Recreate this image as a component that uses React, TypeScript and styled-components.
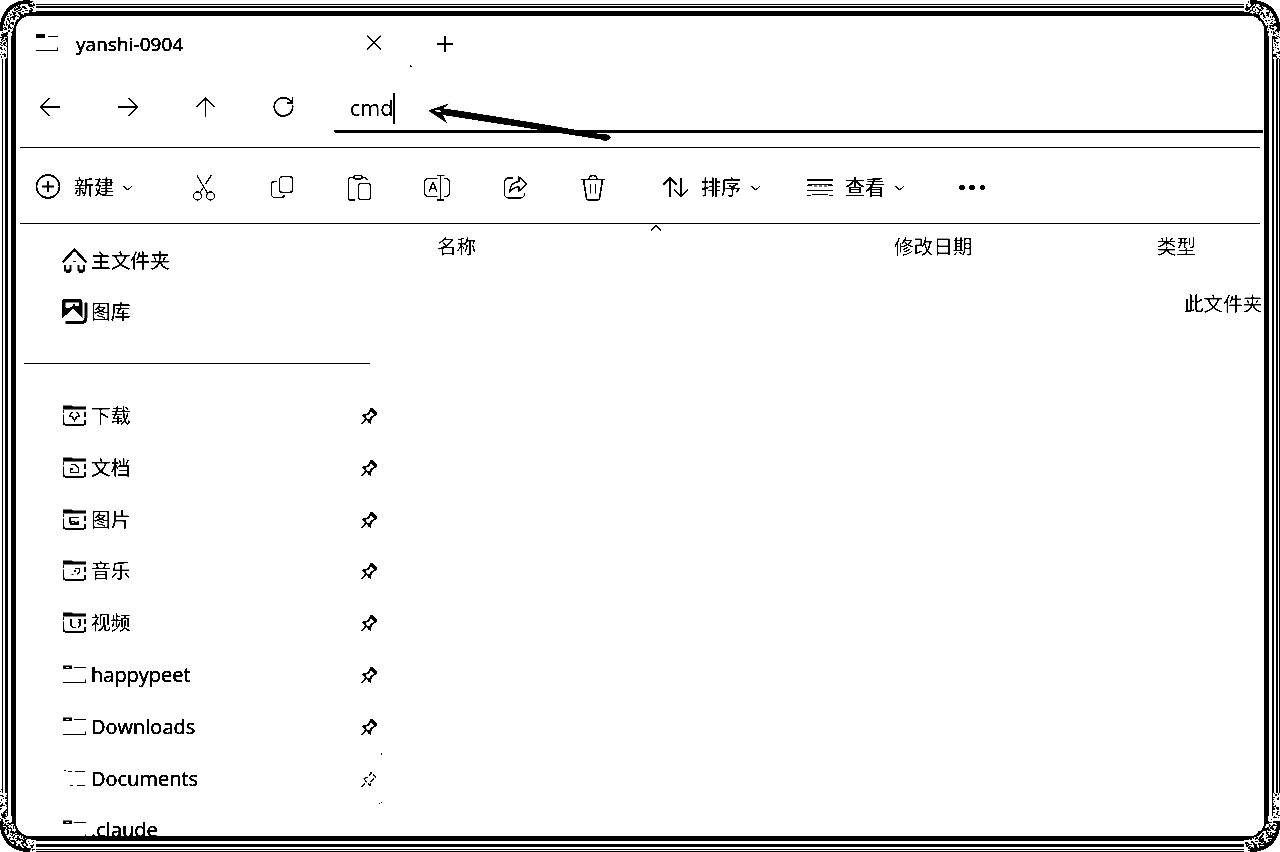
import React from "react";
import styled, { createGlobalStyle } from "styled-components";

const GlobalStyle = createGlobalStyle`
  * { box-sizing: border-box; }
  html, body { margin: 0; background: #fff; overflow: hidden; }
`;

const Page = styled.div`
  position: relative;
  width: 1280px;
  height: 852px;
  display: flex;
  padding: 4px 0 0 2px;
  background: #fff;
  color: #000;
  overflow: hidden;
  font-family: "Open Sans", "Noto Sans CJK SC", sans-serif;
  filter: grayscale(1) contrast(12);
`;

const Ring = styled.div<{ $width: string; $gap: string; $radius: number }>`
  flex: 1;
  min-width: 0;
  display: flex;
  border: solid #000;
  border-width: ${(p) => p.$width};
  padding: ${(p) => p.$gap};
  border-radius: ${(p) => p.$radius}px;
`;

const Window = styled.div`
  flex: 1;
  min-width: 0;
  height: 820px;
  display: flex;
  flex-direction: column;
  overflow: hidden;
  background: #fff;
  border-radius: 13px;
`;

const TabBar = styled.div`
  display: flex;
  align-items: center;
  height: 56px;
  flex: none;
  padding-left: 19px;
`;

const TabTitle = styled.span`
  width: 289px;
  margin-left: 15px;
  font-size: 18.9px;
  line-height: 28px;
  letter-spacing: 0.1px;
  -webkit-text-stroke: 0.5px #000;
`;

const TabButton = styled.span<{ $before: number }>`
  display: flex;
  margin-left: ${(p) => p.$before}px;
`;

const NavBar = styled.div`
  display: flex;
  height: 75px;
  flex: none;
  padding-left: 23px;
`;

const NavButtons = styled.div`
  display: flex;
  align-items: center;
  gap: 56px;
  height: 70px;
`;

const Address = styled.div`
  flex: 1;
  display: flex;
  align-items: center;
  height: 47px;
  margin: 14px 1px 0 39px;
  padding-left: 16px;
  border-bottom: 3px solid #000;
  border-bottom-left-radius: 3px;
  font-size: 21.5px;
  line-height: 30px;
  -webkit-text-stroke: 0.15px #000;
`;

const Caret = styled.span`
  width: 2px;
  height: 31px;
  background: #000;
`;

const Rule = styled.div`
  flex: none;
  height: 1px;
  margin: 0 4px;
  background: #000;
`;

const Toolbar = styled.div`
  display: flex;
  align-items: center;
  height: 75px;
  flex: none;
  padding: 4px 0 0 18px;
`;

const MenuButton = styled.div<{ $after: number }>`
  display: flex;
  align-items: center;
  margin-right: ${(p) => p.$after}px;
`;

const MenuLabel = styled.span<{ $shift?: number }>`
  width: 40px;
  margin: 1px ${(p) => 9 - (p.$shift ?? 0)}px 0 ${(p) => 11 + (p.$shift ?? 0)}px;
  font-size: 20px;
  line-height: 28px;
  white-space: nowrap;
  -webkit-text-stroke: 0.2px #000;
`;

const IconGroup = styled.div`
  display: flex;
  gap: 49.8px;
  margin-right: 55px;
`;

const Body = styled.div`
  display: flex;
  flex: 1;
  min-height: 0;
`;

const Sidebar = styled.nav`
  width: 362px;
  flex: none;
  padding-top: 10.7px;
`;

const Place = styled.div`
  display: flex;
  align-items: center;
  height: 51.8px;
  padding-left: 46px;
`;

const PlaceName = styled.span<{ $latin?: boolean }>`
  flex: 1;
  margin-left: 3px;
  font-size: ${(p) => (p.$latin ? 20 : 19.7)}px;
  line-height: 30px;
  white-space: nowrap;
  -webkit-text-stroke: ${(p) => (p.$latin ? 0.4 : 0.15)}px #000;
`;

const Separator = styled.div`
  display: flex;
  align-items: center;
  height: 51.8px;
  padding: 0 8px;
  &::before { content: ""; flex: 1; height: 1px; margin-top: -1px; background: #000; }
`;

const Files = styled.main`
  flex: 1;
  min-width: 0;
  padding-right: 1px;
`;

const Header = styled.div`
  position: relative;
  display: grid;
  grid-template-columns: 457px 263px 1fr;
  align-items: center;
  height: 45px;
  padding-left: 59px;
  font-size: 19.6px;
  line-height: 28px;
`;

const SortMark = styled.span`
  position: absolute;
  left: 272px;
  top: 0;
  display: flex;
`;

const EmptyNote = styled.div`
  height: 30px;
  margin: 20px 0 0 806px;
  overflow: hidden;
  white-space: nowrap;
  font-size: 19.6px;
  line-height: 30px;
`;

const Overlay = styled.svg`
  position: absolute;
  left: 0;
  top: 0;
`;

type GlyphProps = { w: number; h: number; sw?: number; children: React.ReactNode };
const Glyph = ({ w, h, sw = 1.5, children }: GlyphProps) => (
  <svg width={w} height={h} viewBox={`0 0 ${w} ${h}`} fill="none" stroke="#000" strokeWidth={sw}>
    {children}
  </svg>
);

const Chevron = () => <Glyph w={12} h={8} sw={1.2}><path d="M1.500 2l4.300 4 4.300-4" /></Glyph>;

const toolIcons: React.ReactNode[] = [
  <Glyph w={28} h={28} sw={1.3} key="cut">
    <path d="M7 1.500L18 20M21.500 1l-6 9M13 14l-3.500 5" />
    <circle cx="7.500" cy="22" r="4" /><circle cx="20.500" cy="22" r="4" />
  </Glyph>,
  <Glyph w={28} h={28} sw={1.3} key="copy">
    <rect x="11.500" y="2.500" width="13" height="16" rx="3" />
    <path d="M9 7.500H6.500a3 3 0 0 0-3 3V20a3.500 3.500 0 0 0 3.500 3.500h6.500q2.500 0 3-2.500" />
  </Glyph>,
  <Glyph w={28} h={28} sw={1.6} key="paste">
    <path d="M8.500 3.500H5a2.500 2.500 0 0 0-2.500 2.500V24a2 2 0 0 0 2 2h4.500M16 3.500h2.500a2.500 2.500 0 0 1 2.500 2.500" />
    <rect x="8" y="1.500" width="8" height="3.500" rx="1.700" />
    <rect x="12.500" y="9.500" width="12" height="16" rx="2.500" />
  </Glyph>,
  <Glyph w={28} h={28} sw={1.5} key="rename">
    <path d="M14.500 4.500H5A3.500 3.500 0 0 0 1.500 8v11A3.500 3.500 0 0 0 5 22.500h9.500M21 4.500h1.500a4 4 0 0 1 4 4v10a4 4 0 0 1-4 4H21M17.500 1.500v24.500M14 1.500h7.500M14 26h7.500" />
    <path d="M6 17.500l4-9 4 9M7.500 14.500h5" />
  </Glyph>,
  <Glyph w={28} h={28} sw={1.4} key="share">
    <path d="M12 4H7.500A4 4 0 0 0 3.500 8v12a4 4 0 0 0 4 4h12a4 4 0 0 0 4-4v-1" />
    <path d="M18 3l8 7-8 7V13c-5 0-7 2-9.500 5 .5-6 4-10 9.500-10.500z" strokeWidth="1.300" />
  </Glyph>,
  <Glyph w={28} h={28} sw={1.6} key="trash">
    <path d="M2 5.500h24M10 5a4 3.500 0 0 1 8 0M4.500 6l3 18.500q.3 1.500 2 1.500h9q1.700 0 2-1.500l3-18.500" />
    <path d="M11.500 10v9.500M16.500 10v9.500" strokeWidth="1.100" />
  </Glyph>,
];

type PlaceKind = "home" | "gallery" | "download" | "doc" | "picture" | "music" | "video" | "folder" | "faded";

const folderBadge: Partial<Record<PlaceKind, React.ReactNode>> = {
  download: <path d="M11 10.500q-3 0-3 4h2l2.500 4 2.500-4h2q0-4-3-4" strokeWidth="1.500" />,
  doc: <path d="M9 10.500h4.500l3 3.500v4.500H8.500V15h2.500" />,
  picture: <path d="M8 17.500V11.500h9M8 17l3-2 2.500 1.500 3-.500v2H8" />,
  music: <path d="M13 11.500h4.500V15l-2 2.500M13 13v2M9.500 17.500h2" />,
  video: <path d="M8 11h2.500M9 12v5l2 1.500h3M16 10.500h2v3h-2M18 14v3l-2 1.500" />,
};

const PlaceIcon = ({ kind }: { kind: PlaceKind }) => {
  if (kind === "home")
    return (
      <Glyph w={26} h={28} sw={2.5}>
        <path d="M.500 15.500L12.500 2.500 24.500 15.500" />
        <path d="M3 18v5.500h5.500V18M22 18v5.500h-5.500V18" strokeWidth="2" />
        <path d="M4 25h4.500M17 25h4.500" strokeWidth="1.500" />
        <path d="M11 14.500h3" strokeWidth="1.200" />
      </Glyph>
    );
  if (kind === "gallery")
    return (
      <Glyph w={26} h={28} sw={3}>
        <path d="M0 4q0-3 3-3h15q2.500 0 2.500 3v16.500l-9-10-11.500 10z" fill="#000" stroke="none" />
        <path d="M3.500 4.500h13.500v4l-5.500-1-5 3-3-1z" fill="#fff" stroke="none" />
        <path d="M12 6v2.500" strokeWidth="1.200" />
        <path d="M24 4.500V20q0 4-4 4.500H3.500" />
      </Glyph>
    );
  if (kind === "folder")
    return (
      <Glyph w={26} h={28} sw={1.4}>
        <path d="M1 6.200h9" strokeWidth="3.500" />
        <path d="M4 6.300h3" stroke="#fff" strokeWidth="1" />
        <path d="M12 6.500h12M1 21.500h22.500v-3" />
      </Glyph>
    );
  if (kind === "faded")
    return (
      <Glyph w={26} h={28} sw={1.3}>
        <path d="M2 5.500h2M6 6.500h4M13 6.500h10M8 20.500h3M15 20.500h8" />
      </Glyph>
    );
  return (
    <Glyph w={26} h={28} sw={1.5}>
      <path d="M1 3.500h9l1 1h13v3H1z" fill="#000" stroke="none" />
      <path d="M1.700 8v3M1.700 12.500v8q0 2.500 2.500 2.500h17q2 0 2-2V18M23.200 9.500v5.500" />
      <path d="M4 23h17" strokeWidth="1.800" />
      <g strokeWidth="1.300">{folderBadge[kind]}</g>
    </Glyph>
  );
};

const Pin = ({ thin }: { thin?: boolean }) => (
  <Glyph w={18} h={18} sw={thin ? 1.2 : 1.8}>
    <path d="M1.500 17L6.500 11.500M3.500 8.500l5-1.500 2.500-4.500 5 4.500-5 4-1 4.500z" strokeDasharray={thin ? "5 1.5" : undefined} />
    {!thin && <path d="M10.500 1.500l6 6M3 8.500h3M9.500 12v4" strokeWidth="3" />}
  </Glyph>
);

const places: { kind: PlaceKind; name: string; latin?: boolean; pin?: boolean }[] = [
  { kind: "download", name: "下载", pin: true },
  { kind: "doc", name: "文档", pin: true },
  { kind: "picture", name: "图片", pin: true },
  { kind: "music", name: "音乐", pin: true },
  { kind: "video", name: "视频", pin: true },
  { kind: "folder", name: "happypeet", latin: true, pin: true },
  { kind: "folder", name: "Downloads", latin: true, pin: true },
  { kind: "faded", name: "Documents", latin: true, pin: true },
  { kind: "folder", name: ".claude", latin: true },
];

// Speckled corner, described for the top-left and mirrored for the others.
function speckles(seed: number) {
  let s = seed;
  const rnd = () => ((s = (s * 16807) % 2147483647) / 2147483647);
  let d = "";
  for (let y = 0; y < 64; y++) {
    for (let x = 0; x < 34; x++) {
      const r = Math.hypot(33 - x, 33 - y);
      const arc = y < 33 && r > 19 && r < 33;
      const tail = y >= 33 && x < 7 && rnd() > (y - 33) / 40;
      if ((arc || tail) && rnd() < 0.3) {
        d += `M${x} ${y}h${rnd() < 0.4 ? 2 : 1}v${rnd() < 0.4 ? 2 : 1}H${x}z`;
      }
    }
  }
  return d;
}

const Corner = ({ seed, transform }: { seed: number; transform?: string }) => (
  <g transform={transform} shapeRendering="crispEdges">
    <path d="M0 0H36V12A24 24 0 0 0 12 36H0z" fill="#fff" />
    <path d="M0 35h7v24H0z" fill="#fff" />
    <path d={speckles(seed)} fill="#000" />
    <path d="M1.500 31V25Q5 5 24 2H30" fill="none" stroke="#000" strokeWidth="3.500" />
    <path d="M14.500 38V31Q16 16 31 14.500H38" fill="none" stroke="#000" strokeWidth="2" />
  </g>
);

export default function App() {
  return (
    <Page>
      <GlobalStyle />
      <Ring $width="1px" $gap="1px 1px 1px 2px" $radius={24}>
        <Ring $width="2px 2px 1px 3px" $gap="0 2px 2px 0" $radius={22}>
          <Ring $width="0 2px 3px 0" $gap="3px" $radius={0}>
            <Ring $width="5px" $gap="0" $radius={17}>
              <Window>
                <TabBar>
                  <Glyph w={26} h={28} sw={1.2}>
                    <path d="M1 5.700h9" strokeWidth="4" />
                    <path d="M13 6.500h10M1 20.500h21.500v-3" />
                  </Glyph>
                  <TabTitle>yanshi-0904</TabTitle>
                  <TabButton $before={0}>
                    <Glyph w={18} h={18} sw={1.4}><path d="M2 .700l14 14M16 .700l-14 14" /></Glyph>
                  </TabButton>
                  <TabButton $before={53}>
                    <Glyph w={18} h={18} sw={1.9}><path d="M1 9h16M9 1v16" /></Glyph>
                  </TabButton>
                </TabBar>
                <NavBar>
                  <NavButtons>
                    <Glyph w={22} h={22} sw={1.7}><path d="M21 11H2M10.500 2L1.500 11l9 9" /></Glyph>
                    <Glyph w={22} h={22} sw={1.7}><path d="M1 11h19M11.500 2l9 9-9 9" /></Glyph>
                    <Glyph w={22} h={22} sw={1.7}><path d="M10.500 21V2M1.500 11l9-9 9 9" /></Glyph>
                    <Glyph w={22} h={22} sw={1.7}><path d="M19.500 9A9.200 9.200 0 1 1 14.500 2.500L19 6M19.500 1v6h-6" /></Glyph>
                  </NavButtons>
                  <Address>cmd<Caret /></Address>
                </NavBar>
                <Rule />
                <Toolbar>
                  <MenuButton $after={56}>
                    <Glyph w={28} h={28} sw={1.8}>
                      <circle cx="14" cy="12.500" r="11.500" /><path d="M8 12.500h12M14 6.500v12" />
                    </Glyph>
                    <MenuLabel $shift={1}>新建</MenuLabel>
                    <Chevron />
                  </MenuButton>
                  <IconGroup>{toolIcons}</IconGroup>
                  <MenuButton $after={44}>
                    <Glyph w={28} h={28} sw={1.8}>
                      <path d="M8 23V4M1 11l7-7 7 7M19 4v18.500M12 15.500l7 7 7-7" />
                    </Glyph>
                    <MenuLabel>排序</MenuLabel>
                    <Chevron />
                  </MenuButton>
                  <MenuButton $after={52}>
                    <Glyph w={28} h={28} sw={1.2}>
                      <path d="M1 6h26" strokeWidth="2" />
                      <path d="M1 11.500h5M8 12h3M13 12h3M18 12h3M22 11.500h5M2 10.500h24M1 16.500h26M1 21.500h4M6 20.500h16M23 21.500h4" />
                    </Glyph>
                    <MenuLabel>查看</MenuLabel>
                    <Chevron />
                  </MenuButton>
                  <Glyph w={28} h={28}>
                    <g fill="#000" stroke="none">
                      <circle cx="4" cy="13.500" r="2.700" /><circle cx="14" cy="13.500" r="2.700" /><circle cx="24.500" cy="13.500" r="2.700" />
                    </g>
                  </Glyph>
                </Toolbar>
                <Rule />
                <Body>
                  <Sidebar>
                    <Place><PlaceIcon kind="home" /><PlaceName>主文件夹</PlaceName></Place>
                    <Place><PlaceIcon kind="gallery" /><PlaceName>图库</PlaceName></Place>
                    <Separator />
                    {places.map((p) => (
                      <Place key={p.name}>
                        <PlaceIcon kind={p.kind} />
                        <PlaceName $latin={p.latin}>{p.name}</PlaceName>
                        {p.pin && <Pin thin={p.kind === "faded"} />}
                      </Place>
                    ))}
                  </Sidebar>
                  <Files>
                    <Header>
                      <span>名称</span><span>修改日期</span><span>类型</span>
                      <SortMark><Glyph w={12} h={8}><path d="M1 6.500l5-5 5 5" /></Glyph></SortMark>
                    </Header>
                    <EmptyNote>此文件夹</EmptyNote>
                  </Files>
                </Body>
              </Window>
            </Ring>
          </Ring>
        </Ring>
      </Ring>
      <Overlay width="1280" height="852" viewBox="0 0 1280 852">
        <Corner seed={11} />
        <Corner seed={47} transform="matrix(-1 0 0 1 1280 0)" />
        <Corner seed={83} transform="matrix(1 0 0 -1 0 852)" />
        <Corner seed={129} transform="matrix(-1 0 0 -1 1280 852)" />
        <path d="M428 110.500L450 103l-7 5.500 12 1.500 90 14.500 55 9.500q9-1 11 4-4 5-10 1.500l-158-24.500 4.500 8.500z" />
        <path d="M434 110.500l5-.5 3 1.500-3 1z" fill="#fff" />
        <path d="M410 65h1v1h1v1h-2zM381 753h1v2h-1zM379 803h1v1h-1zM381 802h1v1h-1z" />
      </Overlay>
    </Page>
  );
}
